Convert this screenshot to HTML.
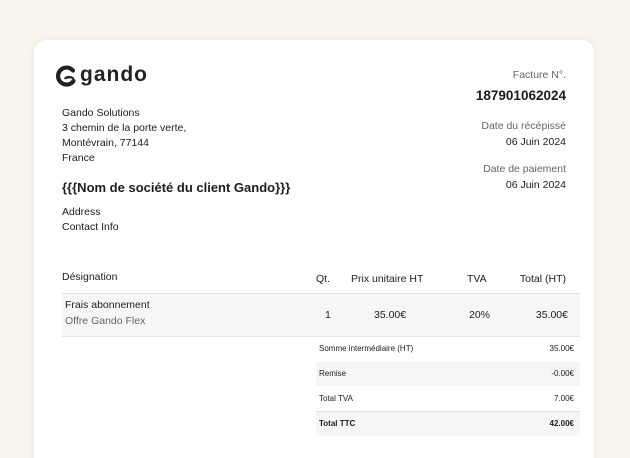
<!DOCTYPE html>
<html><head><meta charset="utf-8"><style>
*{margin:0;padding:0;box-sizing:border-box}
html,body{width:630px;height:458px;overflow:hidden}
body{background:#f8f5ef;font-family:"Liberation Sans",sans-serif;color:#1c1c1c;position:relative}
.card{position:absolute;left:34px;top:40px;width:560px;height:440px;background:#fff;border-radius:12px;box-shadow:0 0 8px rgba(0,0,0,.08)}
.t{position:absolute;white-space:nowrap}
.s{font-size:10.5px;line-height:15px}
.r{text-align:right}
.g{color:#666}
</style></head><body>
<div class="card"></div>
<svg style="position:absolute;left:56px;top:65px" width="21" height="23" viewBox="0 0 21 23">
<path d="M17 5.5 A8.5 8.5 0 1 0 17.5 16" fill="none" stroke="#222" stroke-width="4.2" stroke-linecap="round"/>
<path d="M8 13 Q12 9 18 12.5 L18 14.5 Q13 12 9 14.5 Z" fill="#222"/>
</svg>
<div class="t" style="left:80px;top:63px;font-size:21px;font-weight:bold;letter-spacing:1px;color:#222">gando</div>
<div class="t s" style="left:62px;top:106px">Gando Solutions</div>
<div class="t s" style="left:62px;top:121px">3 chemin de la porte verte,</div>
<div class="t s" style="left:62px;top:136px">Montévrain, 77144</div>
<div class="t s" style="left:62px;top:151px">France</div>
<div class="t" style="left:62px;top:180px;font-size:13px;font-weight:bold">{{{Nom de société du client Gando}}}</div>
<div class="t s" style="left:62px;top:205px">Address</div>
<div class="t s" style="left:62px;top:220px">Contact Info</div>

<div class="t s r g" style="right:64px;top:68px">Facture N°.</div>
<div class="t r" style="right:64px;top:88px;font-size:13.5px;font-weight:bold">187901062024</div>
<div class="t s r g" style="right:64px;top:119px">Date du récépissé</div>
<div class="t s r" style="right:64px;top:135px">06 Juin 2024</div>
<div class="t s r g" style="right:64px;top:162px">Date de paiement</div>
<div class="t s r" style="right:64px;top:178px">06 Juin 2024</div>

<div class="t s" style="left:62px;top:270px">Désignation</div>
<div class="t s" style="left:316px;top:272px">Qt.</div>
<div class="t s" style="left:351px;top:272px">Prix unitaire HT</div>
<div class="t s" style="left:467px;top:272px">TVA</div>
<div class="t s r" style="right:64px;top:272px">Total (HT)</div>

<div style="position:absolute;left:62px;top:293px;width:518px;height:44px;background:#f6f6f6;border-top:1px solid #e3e3e3;border-bottom:1px solid #e3e3e3"></div>
<div class="t s" style="left:65px;top:298px">Frais abonnement</div>
<div class="t s g" style="left:65px;top:314px">Offre Gando Flex</div>
<div class="t s" style="left:325px;top:308px">1</div>
<div class="t s" style="left:374px;top:308px">35.00€</div>
<div class="t s" style="left:469px;top:308px">20%</div>
<div class="t s r" style="right:62px;top:308px">35.00€</div>

<div style="position:absolute;left:316px;top:362px;width:264px;height:24px;background:#f6f6f6"></div>
<div style="position:absolute;left:316px;top:411px;width:264px;height:25px;background:#f6f6f6;border-top:1px solid #e0e0e0"></div>
<div class="t" style="left:319px;top:344px;font-size:8px">Somme intermédiaire (HT)</div>
<div class="t r" style="right:56px;top:344px;font-size:8px">35.00€</div>
<div class="t" style="left:319px;top:369px;font-size:8px">Remise</div>
<div class="t r" style="right:56px;top:369px;font-size:8px">-0.00€</div>
<div class="t" style="left:319px;top:394px;font-size:8px">Total TVA</div>
<div class="t r" style="right:56px;top:394px;font-size:8px">7.00€</div>
<div class="t" style="left:319px;top:419px;font-size:8px;font-weight:bold">Total TTC</div>
<div class="t r" style="right:56px;top:419px;font-size:8px;font-weight:bold">42.00€</div>
</body></html>
